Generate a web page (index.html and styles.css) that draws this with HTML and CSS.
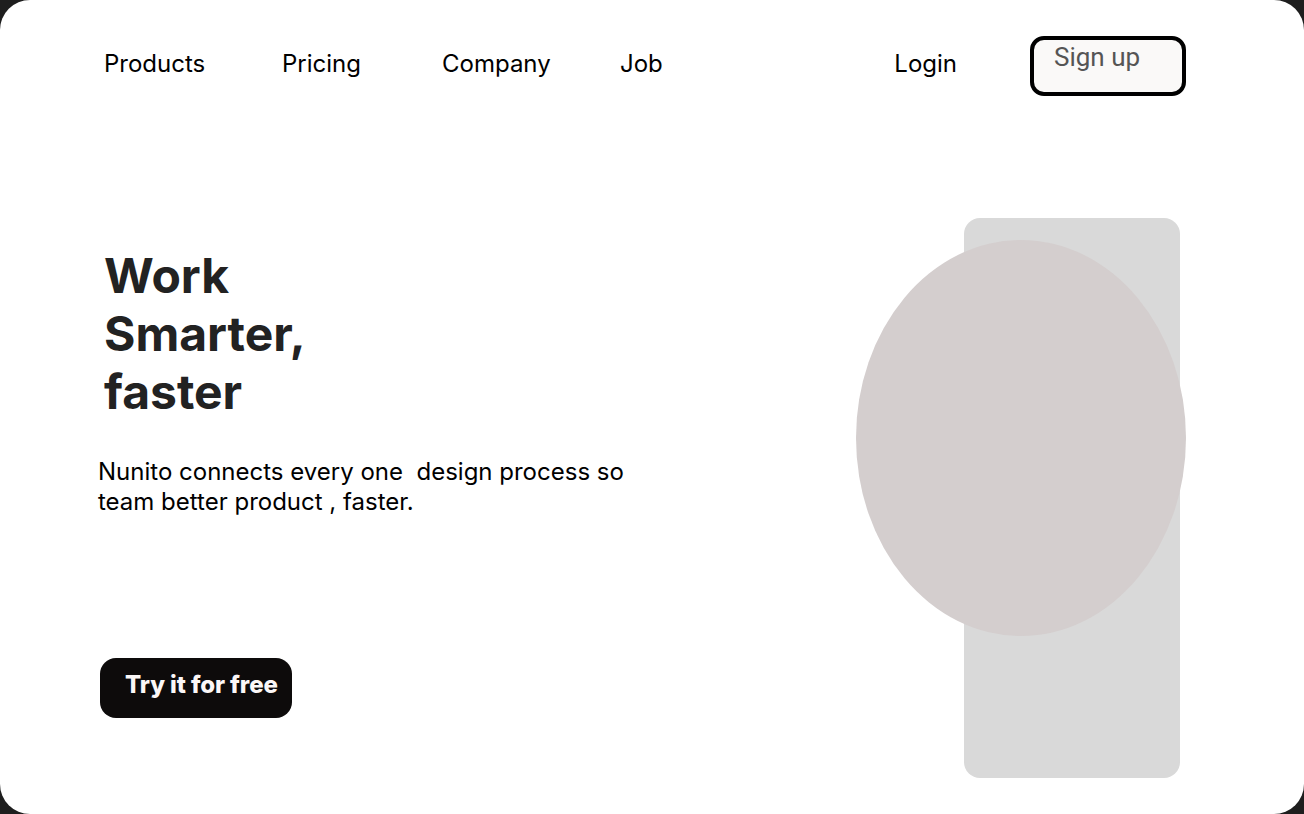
FILE: index.html
```html
<!DOCTYPE html>
<html lang="en">
<head>
<meta charset="utf-8">
<title>Work Smarter, faster</title>
<link rel="stylesheet" href="styles.css">
</head>
<body>
<div class="card">
  <header class="topbar">
    <nav class="nav">
      <a class="nav-link" href="#">Products</a>
      <a class="nav-link" href="#">Pricing</a>
      <a class="nav-link" href="#">Company</a>
      <a class="nav-link" href="#">Job</a>
    </nav>
    <a class="login" href="#">Login</a>
    <a class="signup" href="#">Sign up</a>
  </header>
  <main class="hero">
    <section class="hero-text">
      <h1 class="title">Work<br>Smarter,<br>faster</h1>
      <p class="lead">Nunito connects every one&nbsp; design process so<br>team better product , faster.</p>
      <a class="cta" href="#">Try it for free</a>
    </section>
    <div class="art">
      <div class="panel"></div>
      <div class="oval"></div>
    </div>
  </main>
</div>
</body>
</html>
```

FILE: styles.css
```css
html, body {
  margin: 0;
  padding: 0;
  background: #1e1e1e;
}
body {
  font-family: "Inter", "Liberation Sans", sans-serif;
  color: #000;
}
a {
  text-decoration: none;
  color: inherit;
}
.card {
  width: 1304px;
  height: 814px;
  background: #ffffff;
  border-radius: 30px;
  overflow: hidden;
  display: flex;
  flex-direction: column;
}
.topbar {
  display: flex;
  align-items: flex-start;
  padding: 36px 118px 0 104px;
  height: 60px;
}
.nav {
  display: grid;
  grid-template-columns: 178px 160px 178px auto;
  flex: 1;
  padding-top: 13px;
}
.nav-link, .login {
  font-size: 24px;
  line-height: 29px;
  color: #000;
}
.login {
  margin-right: 73px;
  padding-top: 13px;
}
.signup {
  box-sizing: border-box;
  width: 156px;
  height: 60px;
  border: 4px solid #000;
  border-radius: 14px;
  background: #faf9f8;
  padding: 2px 0 0 20px;
  font-family: "Roboto", "Liberation Sans", sans-serif;
  font-size: 26px;
  line-height: 30px;
  color: #555555;
}
.hero {
  flex: 1;
  display: flex;
  justify-content: space-between;
  padding: 0 124px 0 98px;
}
.hero-text {
  padding-top: 151px;
}
.title {
  margin: 0 0 0 6px;
  font-size: 48px;
  line-height: 58px;
  font-weight: 700;
  color: #222222;
}
.lead {
  margin: 36px 0 0;
  font-size: 24px;
  line-height: 30px;
  color: #000;
}
.cta {
  display: block;
  box-sizing: border-box;
  width: 192px;
  height: 60px;
  margin: 141px 0 0 2px;
  padding: 12px 0 0 25px;
  background: #0d0b0b;
  border-radius: 16px;
  color: #fbf7f7;
  font-size: 24px;
  line-height: 29px;
  font-weight: 800;
  letter-spacing: -0.1px;
}
.art {
  position: relative;
  margin-top: 122px;
  width: 216px;
  height: 560px;
}
.panel {
  width: 216px;
  height: 560px;
  background: #d9d9d9;
  border-radius: 16px;
}
.oval {
  position: absolute;
  left: -108px;
  top: 22px;
  width: 330px;
  height: 396px;
  border-radius: 50%;
  background: #d4cece;
}
```
